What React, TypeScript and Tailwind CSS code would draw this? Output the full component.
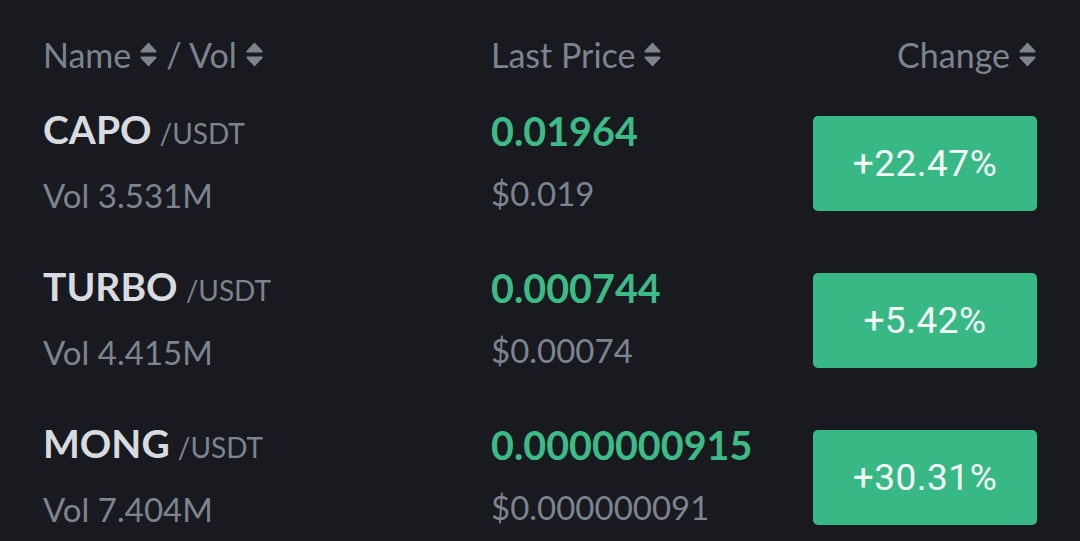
import React from "react";

const SortIcon = () => (
  <svg width="19" height="27" viewBox="0 0 19 27" className="inline-block shrink-0">
    <path d="M9.5 1.5 L17.5 10 Q18 11.5 16.5 11.5 L2.5 11.5 Q1 11.5 1.5 10 Z" fill="#7d848f" />
    <path d="M9.5 25.5 L17.5 17 Q18 15.5 16.5 15.5 L2.5 15.5 Q1 15.5 1.5 17 Z" fill="#7d848f" />
  </svg>
);

const rows = [
  { name: "CAPO", vol: "Vol 3.531M", price: "0.01964", usd: "$0.019", change: "+22.47%" },
  { name: "TURBO", vol: "Vol 4.415M", price: "0.000744", usd: "$0.00074", change: "+5.42%" },
  { name: "MONG", vol: "Vol 7.404M", price: "0.0000000915", usd: "$0.000000091", change: "+30.31%" },
];

export default function App() {
  return (
    <div
      className="w-[1080px] h-[541px] overflow-hidden bg-[#181a1f] px-[43px]"
      style={{ fontFamily: "Lato, 'Noto Sans', sans-serif" }}
    >
      <div className="h-[85px] pt-[23px] flex items-center text-[34px] text-[#7d848f]">
        <div className="w-[448px] flex items-center gap-[8px]">
          <span>Name</span>
          <SortIcon />
          <span>/ Vol</span>
          <SortIcon />
        </div>
        <div className="flex-1 flex items-center gap-[8px]">
          <span>Last Price</span>
          <SortIcon />
        </div>
        <div className="flex items-center gap-[8px]">
          <span>Change</span>
          <SortIcon />
        </div>
      </div>
      {rows.map((r) => (
        <div key={r.name} className="h-[157px] flex items-center">
          <div className="w-[448px] flex flex-col -mt-[4px]">
            <div className="leading-[44px] flex items-baseline">
              <span className="text-[39px] font-bold text-[#d8dbdf]">{r.name}</span>
              <span className="ml-[8px] text-[28px] text-[#7d848f]">/USDT</span>
            </div>
            <div className="mt-[18px] leading-[44px] text-[33px] text-[#7d848f]">{r.vol}</div>
          </div>
          <div className="flex-1 flex flex-col -mt-[4px]">
            <div className="leading-[44px] text-[39.5px] font-bold text-[#3dbb87]">{r.price}</div>
            <div className="mt-[18px] leading-[44px] text-[33px] text-[#7d848f]">{r.usd}</div>
          </div>
          <div
            className="w-[224px] h-[95px] rounded-[5px] bg-[#38b885] flex items-center justify-center text-[37px] tracking-[0.5px] text-[#f3fbf7]"
            style={{ fontFamily: "Roboto, sans-serif" }}
          >
            {r.change}
          </div>
        </div>
      ))}
    </div>
  );
}
